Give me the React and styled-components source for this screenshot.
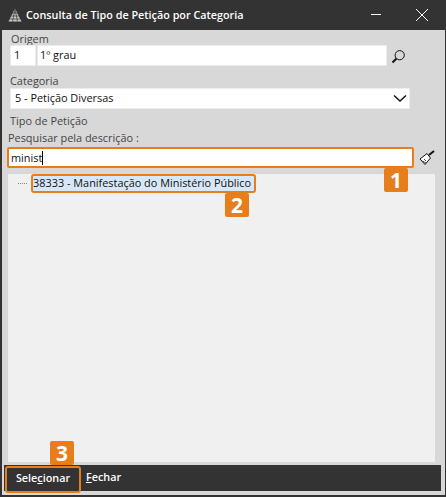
import styled, { createGlobalStyle } from "styled-components";

const GlobalStyle = createGlobalStyle`
  html, body {
    margin: 0;
    padding: 0;
    background: #d8d8d8;
  }
  * {
    box-sizing: border-box;
  }
`;

const Janela = styled.div`
  width: 446px;
  height: 497px;
  display: flex;
  flex-direction: column;
  background: #d8d8d8;
  border: solid #333333;
  border-width: 0 1px 2px 2px;
  font-family: "Open Sans", "Noto Sans", sans-serif;
  font-size: 10.9px;
  color: #1a1a1a;
`;

const BarraTitulo = styled.header`
  height: 30px;
  flex: none;
  margin: 0 -1px 0 -2px;
  padding: 0 18px 0 8px;
  display: flex;
  align-items: center;
  gap: 4px;
  background: #333333;
  color: #ffffff;
`;

const Titulo = styled.span`
  flex: 1;
  padding-bottom: 2px;
  font-size: 10.8px;
  font-weight: 600;
`;

const BotaoJanela = styled.button`
  width: ${(p) => p.$w}px;
  height: 12px;
  margin-left: ${(p) => p.$gap || 0}px;
  padding: 0;
  display: block;
  background: none;
  border: none;
`;

const Formulario = styled.main`
  flex: none;
  padding: 2px 0 0 5px;
  display: flex;
  flex-direction: column;
`;

const Rotulo = styled.label`
  display: block;
  height: ${(p) => p.$h || 15}px;
  margin-top: ${(p) => p.$top || 0}px;
  margin-left: ${(p) => p.$left || 0}px;
  line-height: ${(p) => p.$lh || 15}px;
  color: #444444;
`;

const Linha = styled.div`
  display: flex;
  align-items: center;
  margin-left: ${(p) => p.$left || 0}px;
`;

const Campo = styled.div`
  height: 21px;
  width: ${(p) => p.$w}px;
  margin-left: ${(p) => p.$gap || 0}px;
  padding-left: ${(p) => p.$pad || 3}px;
  padding-bottom: 2px;
  display: flex;
  align-items: center;
  justify-content: space-between;
  background: #ffffff;
  border: 1px solid #ececec;
  color: #111111;
`;

const Seta = styled.svg`
  margin: 2px 2px 0 0;
`;

const Busca = styled.div`
  position: relative;
  width: 407px;
  height: 21px;
  padding-left: 2px;
  display: flex;
  align-items: center;
  background: #ffffff;
  border: 2px solid #e67e1b;
  border-radius: 2px;
  color: #111111;
`;

const Cursor = styled.span`
  width: 1px;
  height: 14px;
  background: #000000;
`;

const Selo = styled.span`
  position: absolute;
  z-index: 2;
  width: 24px;
  height: 24px;
  display: flex;
  align-items: center;
  justify-content: center;
  background: #e67e1b;
  border-radius: 2px;
  color: #ffffff;
  font-size: 21px;
  font-weight: 700;
  line-height: 1;
`;

const SeloBusca = styled(Selo)`
  right: 4px;
  top: 19px;
`;

const SeloItem = styled(Selo)`
  left: 192px;
  top: 17px;
`;

const SeloBotao = styled(Selo)`
  left: 43px;
  top: -27px;
`;

const Arvore = styled.section`
  flex: 1;
  margin: 6px 10px 0 6px;
  padding: 0 0 0 10px;
  background: #f0f0f0;
  display: flex;
  flex-direction: column;
`;

const ItemArvore = styled.div`
  display: flex;
  align-items: center;
`;

const Pontilhado = styled.span`
  width: 9px;
  margin-right: 4px;
  border-top: 1px dotted #888888;
`;

const ItemMarcado = styled.div`
  position: relative;
  width: 225px;
  height: 19px;
  padding: 0 0 2px 0;
  display: flex;
  align-items: center;
  white-space: nowrap;
  background: #d5e8fb;
  border: 2px solid #e67e1b;
  border-radius: 3px;
  color: #111111;
`;

const Rodape = styled.footer`
  flex: none;
  height: 26px;
  margin: 3px 4px 4px 2px;
  display: flex;
  align-items: flex-start;
  gap: 5px;
  background: #333333;
  color: #ffffff;
  font-weight: 600;
  font-size: 10.8px;
`;

const BotaoAcao = styled.button`
  position: relative;
  height: ${(p) => (p.$marcado ? "27px" : "26px")};
  width: ${(p) => (p.$marcado ? "76px" : "auto")};
  margin: ${(p) => (p.$marcado ? "1px 0 0 1px" : "0")};
  padding: 0 0 ${(p) => (p.$marcado ? "5px" : "3px")} 0;
  background: #333333;
  border: ${(p) => (p.$marcado ? "2px solid #e67e1b" : "none")};
  border-radius: 3px;
  color: inherit;
  font: inherit;
`;

export default function App() {
  return (
    <>
      <GlobalStyle />
      <Janela>
        <BarraTitulo>
          <svg width="14" height="14" viewBox="0 0 14 14">
            <path d="M7 0.5 13.5 13.5H.5Z" fill="#c9c9c9" />
            <path d="M.5 11h13M2 8h10M4 5h6M4.5 13.5 7 1M9.5 13.5 7 1" stroke="#333" strokeWidth=".7" />
          </svg>
          <Titulo>Consulta de Tipo de Petição por Categoria</Titulo>
          <BotaoJanela $w={10}>
            <svg width="10" height="12" viewBox="0 0 10 12" style={{ display: "block" }}>
              <path d="M0 5.5h10" stroke="#fff" />
            </svg>
          </BotaoJanela>
          <BotaoJanela $w={12} $gap={31}>
            <svg width="12" height="12" viewBox="0 0 12 12" style={{ display: "block" }}>
              <path d="M0 0l12 12M12 0 0 12" stroke="#fff" />
            </svg>
          </BotaoJanela>
        </BarraTitulo>
        <Formulario>
          <Rotulo $left={4} $h={13} $lh={13}>Origem</Rotulo>
          <Linha $left={3}>
            <Campo $w={26}>1</Campo>
            <Campo $w={350} $gap={1} $pad={2}>1º grau</Campo>
            <svg width="16" height="16" viewBox="0 0 16 16" style={{ marginLeft: 4 }}>
              <circle cx="8.7" cy="7.2" r="4.6" fill="none" stroke="#111" />
              <path d="M5.5 10.5 1.5 14.5" stroke="#111" strokeWidth="2" />
            </svg>
          </Linha>
          <Rotulo $left={3} $h={14} $lh={13} $top={8}>Categoria</Rotulo>
          <Linha $left={3}>
            <Campo $w={400} $pad={4}>
              5 - Petição Diversas
              <Seta width="14" height="9" viewBox="0 0 14 9">
                <path d="M1 1.5 7 7l6-5.5" fill="none" stroke="#111" strokeWidth="1.5" />
              </Seta>
            </Campo>
          </Linha>
          <Rotulo $left={3} $h={17} $top={4}>Tipo de Petição</Rotulo>
          <Rotulo $left={1} $h={17}>Pesquisar pela descrição :</Rotulo>
          <Linha>
            <Busca>
              minist
              <Cursor />
              <SeloBusca>1</SeloBusca>
            </Busca>
            <svg width="16" height="16" viewBox="0 0 16 16" style={{ marginLeft: 5 }}>
              <path d="M1 9 8 3.5l3.5 4.5L6 14.5Z" fill="#fff" stroke="#111" />
              <path d="M3.5 11 7 13M5 9l2 2" stroke="#111" strokeWidth=".8" />
              <path d="M10 5l5-4" stroke="#111" strokeWidth="2" />
            </svg>
          </Linha>
        </Formulario>
        <Arvore>
          <ItemArvore>
            <Pontilhado />
            <ItemMarcado>
              38333 - Manifestação do Ministério Público
              <SeloItem>2</SeloItem>
            </ItemMarcado>
          </ItemArvore>
        </Arvore>
        <Rodape>
          <BotaoAcao $marcado>
            Sele<u>c</u>ionar
            <SeloBotao>3</SeloBotao>
          </BotaoAcao>
          <BotaoAcao>
            <u>F</u>echar
          </BotaoAcao>
        </Rodape>
      </Janela>
    </>
  );
}
